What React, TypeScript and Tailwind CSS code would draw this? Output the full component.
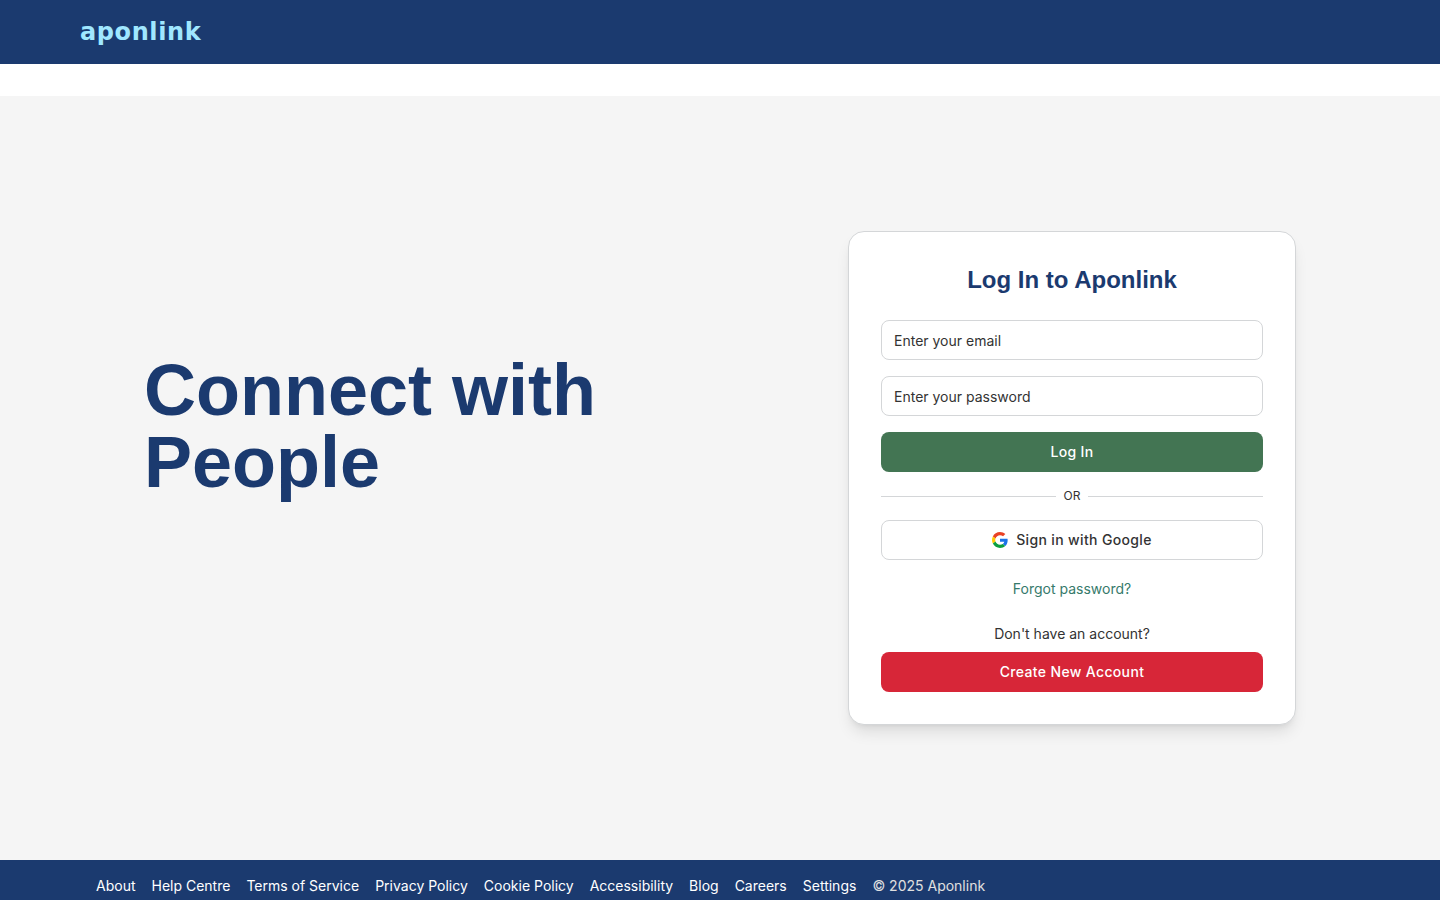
import { useState } from 'react'
import type { FormEvent } from 'react'

const FOOTER_LINKS = [
  { label: 'About', href: '/about' },
  { label: 'Help Centre', href: '/help' },
  { label: 'Terms of Service', href: '/terms' },
  { label: 'Privacy Policy', href: '/privacy' },
  { label: 'Cookie Policy', href: '/cookies' },
  { label: 'Accessibility', href: '/accessibility' },
  { label: 'Blog', href: '/blog' },
  { label: 'Careers', href: '/careers' },
  { label: 'Settings', href: '/settings' },
]

function GoogleIcon() {
  return (
    <svg className="size-4" viewBox="0 0 48 48" aria-hidden="true">
      <path fill="#E94225" d="M24 9.5c3.54 0 6.71 1.22 9.21 3.6l6.85-6.85C35.9 2.38 30.47 0 24 0 14.62 0 6.51 5.38 2.56 13.22l7.98 6.19C12.43 13.72 17.74 9.5 24 9.5z" />
      <path fill="#1A73E8" d="M46.98 24.55c0-1.57-.15-3.09-.38-4.55H24v9.02h12.94c-.58 2.96-2.26 5.48-4.78 7.18l7.73 6c4.51-4.18 7.09-10.36 7.09-17.65z" />
      <path fill="#FFCB05" d="M10.53 28.59c-.48-1.45-.76-2.99-.76-4.59s.27-3.14.76-4.59l-7.98-6.19C.92 16.46 0 20.12 0 24c0 3.88.92 7.54 2.56 10.78l7.97-6.19z" />
      <path fill="#0D9F3F" d="M24 48c6.48 0 11.93-2.13 15.89-5.81l-7.73-6c-2.15 1.45-4.92 2.3-8.16 2.3-6.26 0-11.57-4.22-13.47-9.91l-7.98 6.19C6.51 42.62 14.62 48 24 48z" />
    </svg>
  )
}

function LoginCard() {
  const [email, setEmail] = useState('')
  const [password, setPassword] = useState('')

  const inputClass = 'h-10 w-full rounded-lg border border-[#d4d6d8] bg-white px-3 text-sm text-[#333333] placeholder:text-[#333333] focus:outline-none focus:ring-2 focus:ring-[#1b3a6f]'

  function handleSubmit(e: FormEvent) {
    e.preventDefault()
  }

  return (
    <div className="w-full max-w-md rounded-2xl border border-[#d4d6d8] bg-white p-8 shadow-lg">
      <h2 className="mb-6 text-center font-['Liberation_Sans',sans-serif] text-2xl font-bold text-[#1b3a6f]">
        Log In to Aponlink
      </h2>

      <form onSubmit={handleSubmit} className="flex flex-col gap-4">
        <input
          type="email"
          aria-label="Email"
          placeholder="Enter your email"
          value={email}
          onChange={e => setEmail(e.target.value)}
          className={inputClass}
        />
        <input
          type="password"
          aria-label="Password"
          placeholder="Enter your password"
          value={password}
          onChange={e => setPassword(e.target.value)}
          className={inputClass}
        />
        <button
          type="submit"
          className="h-10 w-full rounded-lg bg-[#437553] text-sm font-medium tracking-wide text-white transition hover:bg-[#386346]"
        >
          Log In
        </button>
      </form>

      <div className="my-4 flex items-center gap-2">
        <div className="h-px flex-1 bg-[#d4d6d8]" />
        <span className="text-xs text-[#333333]">OR</span>
        <div className="h-px flex-1 bg-[#d4d6d8]" />
      </div>

      <button
        type="button"
        className="flex h-10 w-full items-center justify-center gap-2 rounded-lg border border-[#d4d6d8] bg-white text-sm font-medium tracking-wide text-[#333333] transition hover:bg-gray-50"
      >
        <GoogleIcon />
        Sign in with Google
      </button>

      <div className="mt-4 text-center">
        <a href="/forgot-password" className="text-sm text-[#367a6b] hover:underline">
          Forgot password?
        </a>
      </div>

      <div className="mt-6 text-center">
        <p className="mb-2 text-sm text-[#333333]">Don't have an account?</p>
        <button
          type="button"
          className="h-10 w-full rounded-lg bg-[#d72638] text-sm font-medium tracking-wide text-white transition hover:bg-[#b81f2f]"
        >
          Create New Account
        </button>
      </div>
    </div>
  )
}

export default function App() {
  return (
    <div className="flex min-h-screen flex-col bg-white font-['Inter',sans-serif]">
      <header className="bg-[#1b3a6f]">
        <div className="mx-auto flex h-16 max-w-7xl items-center">
          <a href="/" className="font-['DejaVu_Sans',sans-serif] text-2xl font-bold tracking-wide text-[#a0e7ff]">
            aponlink
          </a>
        </div>
      </header>

      <main className="flex flex-1 flex-col pt-8">
        <section className="flex min-h-[calc(100vh-136px)] flex-1 items-center bg-[#f5f5f5]">
          <div className="mx-auto grid w-full max-w-7xl grid-cols-1 items-center gap-8 px-16 py-8 md:grid-cols-2">
            <h1 className="mb-26 font-['Liberation_Sans',sans-serif] text-7xl leading-none font-bold text-[#1b3a6f]">
              Connect with People
            </h1>
            <div className="flex justify-end">
              <LoginCard />
            </div>
          </div>
        </section>
      </main>

      <footer className="bg-[#1b3a6f] py-4">
        <div className="mx-auto flex max-w-7xl flex-wrap gap-4 px-4 text-sm text-white">
          {FOOTER_LINKS.map(link => (
            <a key={link.href} href={link.href} className="hover:underline">
              {link.label}
            </a>
          ))}
          <span className="text-[#e0e0e0]">© 2025 Aponlink</span>
        </div>
      </footer>
    </div>
  )
}
